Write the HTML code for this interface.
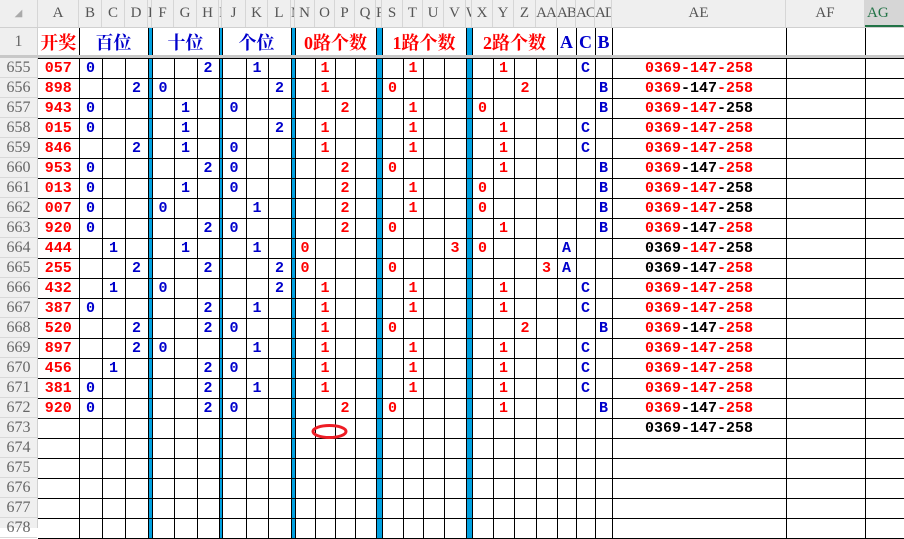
<!DOCTYPE html>
<html><head><meta charset="utf-8"><style>
*{margin:0;padding:0;box-sizing:border-box}
body{width:904px;height:528px;overflow:hidden;background:#fff;position:relative;font-family:"Liberation Mono",monospace}
.ch{position:absolute;left:0;top:0;width:904px;height:28px;background:#efefef;border-bottom:1px solid #d0d0d0}
.ch div{position:absolute;top:0;height:27px;line-height:27px;text-align:center;color:#555;font-family:"Liberation Serif",serif;font-size:15px;border-right:1px solid #d6d6d6;overflow:hidden}
.rh{position:absolute;left:0;top:28px;width:38px;height:500px;background:#efefef;border-right:1px solid #d0d0d0}
.rh div{position:absolute;left:0;width:37px;text-align:center;color:#666;font-family:"Liberation Serif",serif;font-size:16px;border-bottom:1px solid #d8d8d8}
table{position:absolute;left:38px;border-collapse:collapse;table-layout:fixed;width:866px}
td{padding:0;text-align:center;overflow:hidden;white-space:nowrap}
#d td{border:1px solid #000;height:20px;font-weight:bold;font-size:15px;color:#0000cc;line-height:18px}
#d tr td:nth-child(1){border-left:none;color:#f00}
#d td:nth-child(n+14):nth-child(-n+27){color:#f00}
#d td:nth-child(5),#d td:nth-child(9),#d td:nth-child(13),#d td:nth-child(18),#d td:nth-child(23){background:#00a0e0}
.r{color:#f00}.k{color:#000}
#h{top:28px}
#h td{height:28px;border-left:1px solid #000;border-right:1px solid #000;font-family:"Liberation Serif","Noto Serif CJK SC",serif;font-weight:bold;font-size:18px;color:#0000cc}
#h td.bb{background:#00a0e0}
#h td.rd{color:#f00}
#h td.f{border-left:none}
.frz{position:absolute;left:0;top:55px;width:904px;height:3px;background:#c8c8c8}
</style></head><body>
<div class="ch">
<div style="left:0;width:38px;color:#aaa;font-size:10px">◢</div>
<div style="left:38px;width:41px">A</div><div style="left:79px;width:23px">B</div><div style="left:102px;width:23px">C</div><div style="left:125px;width:23px">D</div><div style="left:148px;width:4px">E</div><div style="left:152px;width:22px">F</div><div style="left:174px;width:23px">G</div><div style="left:197px;width:22px">H</div><div style="left:219px;width:3px">I</div><div style="left:222px;width:24px">J</div><div style="left:246px;width:22px">K</div><div style="left:268px;width:23px">L</div><div style="left:291px;width:4px">M</div><div style="left:295px;width:20px">N</div><div style="left:315px;width:20px">O</div><div style="left:335px;width:20px">P</div><div style="left:355px;width:21px">Q</div><div style="left:376px;width:6px">R</div><div style="left:382px;width:21px">S</div><div style="left:403px;width:20px">T</div><div style="left:423px;width:21px">U</div><div style="left:444px;width:22px">V</div><div style="left:466px;width:6px">W</div><div style="left:472px;width:21px">X</div><div style="left:493px;width:21px">Y</div><div style="left:514px;width:22px">Z</div><div style="left:536px;width:21px;letter-spacing:-1px">AA</div><div style="left:557px;width:19px;letter-spacing:-1px">AB</div><div style="left:576px;width:19px;letter-spacing:-1px">AC</div><div style="left:595px;width:17px;letter-spacing:-1px">AD</div><div style="left:612px;width:174px">AE</div><div style="left:786px;width:79px">AF</div><div style="left:865px;width:39px;background:#d6d6d6;color:#217346;border-bottom:2px solid #217346;text-align:left;padding-left:2px">AG</div>
</div>
<div class="rh">
<div style="top:0;height:28px;line-height:28px">1</div>
<div style="top:30px;height:20px;line-height:20px">655</div><div style="top:50px;height:20px;line-height:20px">656</div><div style="top:70px;height:20px;line-height:20px">657</div><div style="top:90px;height:20px;line-height:20px">658</div><div style="top:110px;height:20px;line-height:20px">659</div><div style="top:130px;height:20px;line-height:20px">660</div><div style="top:150px;height:20px;line-height:20px">661</div><div style="top:170px;height:20px;line-height:20px">662</div><div style="top:190px;height:20px;line-height:20px">663</div><div style="top:210px;height:20px;line-height:20px">664</div><div style="top:230px;height:20px;line-height:20px">665</div><div style="top:250px;height:20px;line-height:20px">666</div><div style="top:270px;height:20px;line-height:20px">667</div><div style="top:290px;height:20px;line-height:20px">668</div><div style="top:310px;height:20px;line-height:20px">669</div><div style="top:330px;height:20px;line-height:20px">670</div><div style="top:350px;height:20px;line-height:20px">671</div><div style="top:370px;height:20px;line-height:20px">672</div><div style="top:390px;height:20px;line-height:20px">673</div><div style="top:410px;height:20px;line-height:20px">674</div><div style="top:430px;height:20px;line-height:20px">675</div><div style="top:450px;height:20px;line-height:20px">676</div><div style="top:470px;height:20px;line-height:20px">677</div><div style="top:490px;height:20px;line-height:20px">678</div>
</div>
<table id="h">
<colgroup><col style="width:41px"><col style="width:23px"><col style="width:23px"><col style="width:23px"><col style="width:4px"><col style="width:22px"><col style="width:23px"><col style="width:22px"><col style="width:3px"><col style="width:24px"><col style="width:22px"><col style="width:23px"><col style="width:4px"><col style="width:20px"><col style="width:20px"><col style="width:20px"><col style="width:21px"><col style="width:6px"><col style="width:21px"><col style="width:20px"><col style="width:21px"><col style="width:22px"><col style="width:6px"><col style="width:21px"><col style="width:21px"><col style="width:22px"><col style="width:21px"><col style="width:19px"><col style="width:19px"><col style="width:17px"><col style="width:174px"><col style="width:79px"><col style="width:39px"></colgroup>
<tr><td class="rd f">开奖</td><td colspan="3">百位</td><td class="bb"></td><td colspan="3">十位</td><td class="bb"></td><td colspan="3">个位</td><td class="bb"></td><td colspan="4" class="rd">0路个数</td><td class="bb"></td><td colspan="4" class="rd">1路个数</td><td class="bb"></td><td colspan="4" class="rd">2路个数</td><td>A</td><td>C</td><td>B</td><td></td><td></td><td></td></tr>
</table>
<div class="frz"></div>
<table id="d" style="top:58px">
<colgroup><col style="width:41px"><col style="width:23px"><col style="width:23px"><col style="width:23px"><col style="width:4px"><col style="width:22px"><col style="width:23px"><col style="width:22px"><col style="width:3px"><col style="width:24px"><col style="width:22px"><col style="width:23px"><col style="width:4px"><col style="width:20px"><col style="width:20px"><col style="width:20px"><col style="width:21px"><col style="width:6px"><col style="width:21px"><col style="width:20px"><col style="width:21px"><col style="width:22px"><col style="width:6px"><col style="width:21px"><col style="width:21px"><col style="width:22px"><col style="width:21px"><col style="width:19px"><col style="width:19px"><col style="width:17px"><col style="width:174px"><col style="width:79px"><col style="width:39px"></colgroup>
<tr><td>057<td>0<td><td><td><td><td><td>2<td><td><td>1<td><td><td><td>1<td><td><td><td><td>1<td><td><td><td><td>1<td><td><td><td>C<td><td><span class="r">0369-147-258</span><td><td></tr>
<tr><td>898<td><td><td>2<td><td>0<td><td><td><td><td><td>2<td><td><td>1<td><td><td><td>0<td><td><td><td><td><td><td>2<td><td><td><td>B<td><span class="r">0369</span><span class="k">-147</span><span class="r">-258</span><td><td></tr>
<tr><td>943<td>0<td><td><td><td><td>1<td><td><td>0<td><td><td><td><td><td>2<td><td><td><td>1<td><td><td><td>0<td><td><td><td><td><td>B<td><span class="r">0369-147</span><span class="k">-258</span><td><td></tr>
<tr><td>015<td>0<td><td><td><td><td>1<td><td><td><td><td>2<td><td><td>1<td><td><td><td><td>1<td><td><td><td><td>1<td><td><td><td>C<td><td><span class="r">0369-147-258</span><td><td></tr>
<tr><td>846<td><td><td>2<td><td><td>1<td><td><td>0<td><td><td><td><td>1<td><td><td><td><td>1<td><td><td><td><td>1<td><td><td><td>C<td><td><span class="r">0369-147-258</span><td><td></tr>
<tr><td>953<td>0<td><td><td><td><td><td>2<td><td>0<td><td><td><td><td><td>2<td><td><td>0<td><td><td><td><td><td>1<td><td><td><td><td>B<td><span class="r">0369</span><span class="k">-147</span><span class="r">-258</span><td><td></tr>
<tr><td>013<td>0<td><td><td><td><td>1<td><td><td>0<td><td><td><td><td><td>2<td><td><td><td>1<td><td><td><td>0<td><td><td><td><td><td>B<td><span class="r">0369-147</span><span class="k">-258</span><td><td></tr>
<tr><td>007<td>0<td><td><td><td>0<td><td><td><td><td>1<td><td><td><td><td>2<td><td><td><td>1<td><td><td><td>0<td><td><td><td><td><td>B<td><span class="r">0369-147</span><span class="k">-258</span><td><td></tr>
<tr><td>920<td>0<td><td><td><td><td><td>2<td><td>0<td><td><td><td><td><td>2<td><td><td>0<td><td><td><td><td><td>1<td><td><td><td><td>B<td><span class="r">0369</span><span class="k">-147</span><span class="r">-258</span><td><td></tr>
<tr><td>444<td><td>1<td><td><td><td>1<td><td><td><td>1<td><td><td>0<td><td><td><td><td><td><td><td>3<td><td>0<td><td><td><td>A<td><td><td><span class="k">0369</span><span class="r">-147</span><span class="k">-258</span><td><td></tr>
<tr><td>255<td><td><td>2<td><td><td><td>2<td><td><td><td>2<td><td>0<td><td><td><td><td>0<td><td><td><td><td><td><td><td>3<td>A<td><td><td><span class="k">0369-147</span><span class="r">-258</span><td><td></tr>
<tr><td>432<td><td>1<td><td><td>0<td><td><td><td><td><td>2<td><td><td>1<td><td><td><td><td>1<td><td><td><td><td>1<td><td><td><td>C<td><td><span class="r">0369-147-258</span><td><td></tr>
<tr><td>387<td>0<td><td><td><td><td><td>2<td><td><td>1<td><td><td><td>1<td><td><td><td><td>1<td><td><td><td><td>1<td><td><td><td>C<td><td><span class="r">0369-147-258</span><td><td></tr>
<tr><td>520<td><td><td>2<td><td><td><td>2<td><td>0<td><td><td><td><td>1<td><td><td><td>0<td><td><td><td><td><td><td>2<td><td><td><td>B<td><span class="r">0369</span><span class="k">-147</span><span class="r">-258</span><td><td></tr>
<tr><td>897<td><td><td>2<td><td>0<td><td><td><td><td>1<td><td><td><td>1<td><td><td><td><td>1<td><td><td><td><td>1<td><td><td><td>C<td><td><span class="r">0369-147-258</span><td><td></tr>
<tr><td>456<td><td>1<td><td><td><td><td>2<td><td>0<td><td><td><td><td>1<td><td><td><td><td>1<td><td><td><td><td>1<td><td><td><td>C<td><td><span class="r">0369-147-258</span><td><td></tr>
<tr><td>381<td>0<td><td><td><td><td><td>2<td><td><td>1<td><td><td><td>1<td><td><td><td><td>1<td><td><td><td><td>1<td><td><td><td>C<td><td><span class="r">0369-147-258</span><td><td></tr>
<tr><td>920<td>0<td><td><td><td><td><td>2<td><td>0<td><td><td><td><td><td>2<td><td><td>0<td><td><td><td><td><td>1<td><td><td><td><td>B<td><span class="r">0369</span><span class="k">-147</span><span class="r">-258</span><td><td></tr>
<tr><td><td><td><td><td><td><td><td><td><td><td><td><td><td><td><td><td><td><td><td><td><td><td><td><td><td><td><td><td><td><td><span class="k">0369-147-258</span><td><td></tr>
<tr><td><td><td><td><td><td><td><td><td><td><td><td><td><td><td><td><td><td><td><td><td><td><td><td><td><td><td><td><td><td><td><td><td></tr>
<tr><td><td><td><td><td><td><td><td><td><td><td><td><td><td><td><td><td><td><td><td><td><td><td><td><td><td><td><td><td><td><td><td><td></tr>
<tr><td><td><td><td><td><td><td><td><td><td><td><td><td><td><td><td><td><td><td><td><td><td><td><td><td><td><td><td><td><td><td><td><td></tr>
<tr><td><td><td><td><td><td><td><td><td><td><td><td><td><td><td><td><td><td><td><td><td><td><td><td><td><td><td><td><td><td><td><td><td></tr>
<tr><td><td><td><td><td><td><td><td><td><td><td><td><td><td><td><td><td><td><td><td><td><td><td><td><td><td><td><td><td><td><td><td><td></tr>
</table>
<svg style="position:absolute;left:0;top:0" width="904" height="528"><ellipse cx="329.5" cy="431.5" rx="16.5" ry="6" fill="none" stroke="#ee1c24" stroke-width="3"/></svg>
</body></html>
